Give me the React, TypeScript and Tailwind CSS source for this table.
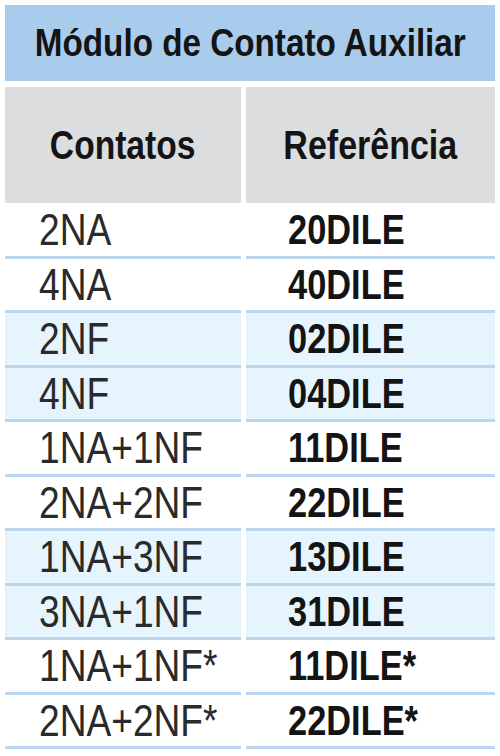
const rows: { c: string; r: string; blue: boolean }[] = [
  { c: "2NA", r: "20DILE", blue: false },
  { c: "4NA", r: "40DILE", blue: false },
  { c: "2NF", r: "02DILE", blue: true },
  { c: "4NF", r: "04DILE", blue: true },
  { c: "1NA+1NF", r: "11DILE", blue: false },
  { c: "2NA+2NF", r: "22DILE", blue: false },
  { c: "1NA+3NF", r: "13DILE", blue: true },
  { c: "3NA+1NF", r: "31DILE", blue: true },
  { c: "1NA+1NF*", r: "11DILE*", blue: false },
  { c: "2NA+2NF*", r: "22DILE*", blue: false },
];

export default function App() {
  return (
    <div
      className="w-[500px] h-[756px] bg-white px-[5px] pt-[5px] overflow-hidden"
      style={{ fontFamily: '"Liberation Sans", Arial, sans-serif' }}
    >
      {/* title */}
      <div className="h-[76px] bg-[#a9cbec] flex items-center justify-center">
        <span className="inline-block whitespace-nowrap text-[38px] font-bold text-[#141414] scale-x-[0.875]">
          Módulo de Contato Auxiliar
        </span>
      </div>

      {/* column headers */}
      <div className="mt-[6px] grid grid-cols-[236px_249px] gap-x-[5px]">
        <div className="h-[116px] bg-[#dcdddf] flex items-center justify-center">
          <span className="inline-block whitespace-nowrap text-[40px] font-bold text-[#141414] scale-x-[0.84]">
            Contatos
          </span>
        </div>
        <div className="h-[116px] bg-[#dcdddf] flex items-center justify-center">
          <span className="inline-block whitespace-nowrap text-[40px] font-bold text-[#141414] scale-x-[0.85]">
            Referência
          </span>
        </div>
      </div>

      {/* data rows */}
      <div className="mt-px flex flex-col">
        {rows.map((row) => (
          <div key={row.c} className="grid grid-cols-[236px_249px] gap-x-[5px]">
            <div
              className={`h-[54.5px] border-b-[3px] border-[#bdd6ef] flex items-center pl-[34px] ${
                row.blue ? "bg-[#e6f4fd]" : "bg-white"
              }`}
            >
              <span className="inline-block whitespace-nowrap origin-left scale-x-[0.825] text-[45px] text-[#2a2a2a] leading-none">
                {row.c}
              </span>
            </div>
            <div
              className={`h-[54.5px] border-b-[3px] border-[#bdd6ef] flex items-center pl-[42px] ${
                row.blue ? "bg-[#e6f4fd]" : "bg-white"
              }`}
            >
              <span className="inline-block whitespace-nowrap origin-left scale-x-[0.8] text-[43px] font-bold text-[#141414] leading-none">
                {row.r}
              </span>
            </div>
          </div>
        ))}
      </div>
    </div>
  );
}
